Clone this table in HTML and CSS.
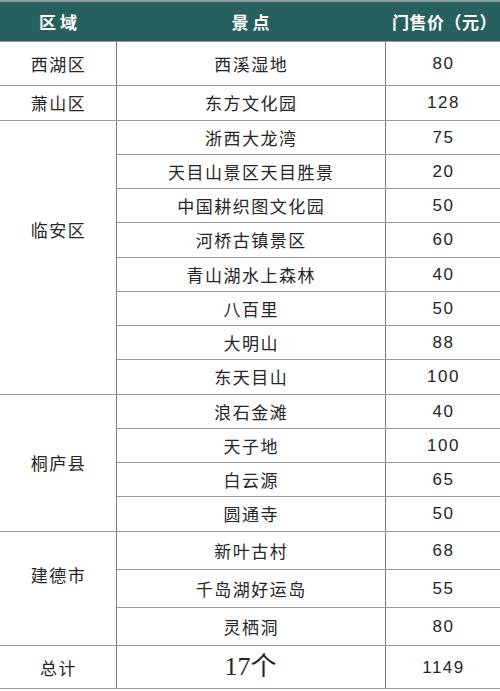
FILE: index.html
```html
<!DOCTYPE html>
<html lang="zh-CN">
<head>
<meta charset="utf-8">
<title>杭州景点门票价格</title>
<link rel="stylesheet" href="styles.css">
</head>
<body>
<table class="price-table">
  <colgroup>
    <col class="c-area">
    <col class="c-spot">
    <col class="c-price">
  </colgroup>
  <thead>
    <tr class="r-head">
      <th class="h-wide">区域</th>
      <th class="h-wide">景点</th>
      <th class="h-price">门售价（元）</th>
    </tr>
  </thead>
  <tbody>
    <tr class="r-first"><td>西湖区</td><td>西溪湿地</td><td class="num">80</td></tr>
    <tr class="r-second"><td>萧山区</td><td>东方文化园</td><td class="num">128</td></tr>

    <tr class="r-std"><td rowspan="8" class="g-linan">临安区</td><td>浙西大龙湾</td><td class="num">75</td></tr>
    <tr class="r-std"><td>天目山景区天目胜景</td><td class="num">20</td></tr>
    <tr class="r-std"><td>中国耕织图文化园</td><td class="num">50</td></tr>
    <tr class="r-std"><td>河桥古镇景区</td><td class="num">60</td></tr>
    <tr class="r-std"><td>青山湖水上森林</td><td class="num">40</td></tr>
    <tr class="r-std"><td>八百里</td><td class="num">50</td></tr>
    <tr class="r-std"><td>大明山</td><td class="num">88</td></tr>
    <tr class="r-std"><td>东天目山</td><td class="num">100</td></tr>

    <tr class="r-std"><td rowspan="4">桐庐县</td><td>浪石金滩</td><td class="num">40</td></tr>
    <tr class="r-std"><td>天子地</td><td class="num">100</td></tr>
    <tr class="r-std"><td>白云源</td><td class="num">65</td></tr>
    <tr class="r-std"><td>圆通寺</td><td class="num">50</td></tr>

    <tr class="r-tall"><td rowspan="3" class="g-jiande">建德市</td><td>新叶古村</td><td class="num">68</td></tr>
    <tr class="r-tall"><td>千岛湖好运岛</td><td class="num">55</td></tr>
    <tr class="r-tall"><td>灵栖洞</td><td class="num">80</td></tr>

    <tr class="r-total"><td>总计</td><td class="count">17个</td><td class="num">1149</td></tr>
  </tbody>
</table>
</body>
</html>
```

FILE: styles.css
```css
html, body {
  margin: 0;
  padding: 0;
  background: #ffffff;
}

.price-table {
  width: 500px;
  border-collapse: collapse;
  table-layout: fixed;
  font-family: "Noto Sans CJK SC", "Liberation Sans", sans-serif;
  color: #262626;
}

.c-area { width: 116px; }
.c-spot { width: 269px; }
.c-price { width: 115px; }

.price-table th {
  background: #27615f;
  color: #ffffff;
  font-weight: bold;
  font-size: 17px;
  text-align: center;
  vertical-align: middle;
  padding: 0;
  border-top: 2px solid #8f9a99;
}

.h-wide { letter-spacing: 4px; text-indent: 4px; }
.h-price { letter-spacing: 0.5px; text-indent: 4px; }

.price-table td {
  font-size: 17px;
  letter-spacing: 1.5px;
  text-indent: 1.5px;
  text-align: center;
  vertical-align: middle;
  padding: 0;
  border-top: 1px solid #9a9a9a;
  border-bottom: 1px solid #9a9a9a;
  border-left: 1px solid #7d7d7d;
  border-right: 1px solid #7d7d7d;
  line-height: 1;
}

.price-table tr td:first-child { border-left: none; }
.price-table tr td:last-child { border-right: none; }

.price-table td.g-linan { padding-bottom: 56px; }
.price-table td.g-jiande { padding-bottom: 28px; }

.price-table .num {
  font-family: "Liberation Sans", sans-serif;
  letter-spacing: 1.5px;
}

.price-table .count {
  font-family: "Liberation Serif", "Noto Sans CJK SC", serif;
  font-size: 26px;
  letter-spacing: 0;
  text-indent: 0;
}

.r-head { height: 40px; }
.r-first { height: 44px; }
.r-second { height: 35px; }
.r-std { height: 34.25px; }
.r-tall { height: 38.3px; }
.r-total { height: 43px; }
```
